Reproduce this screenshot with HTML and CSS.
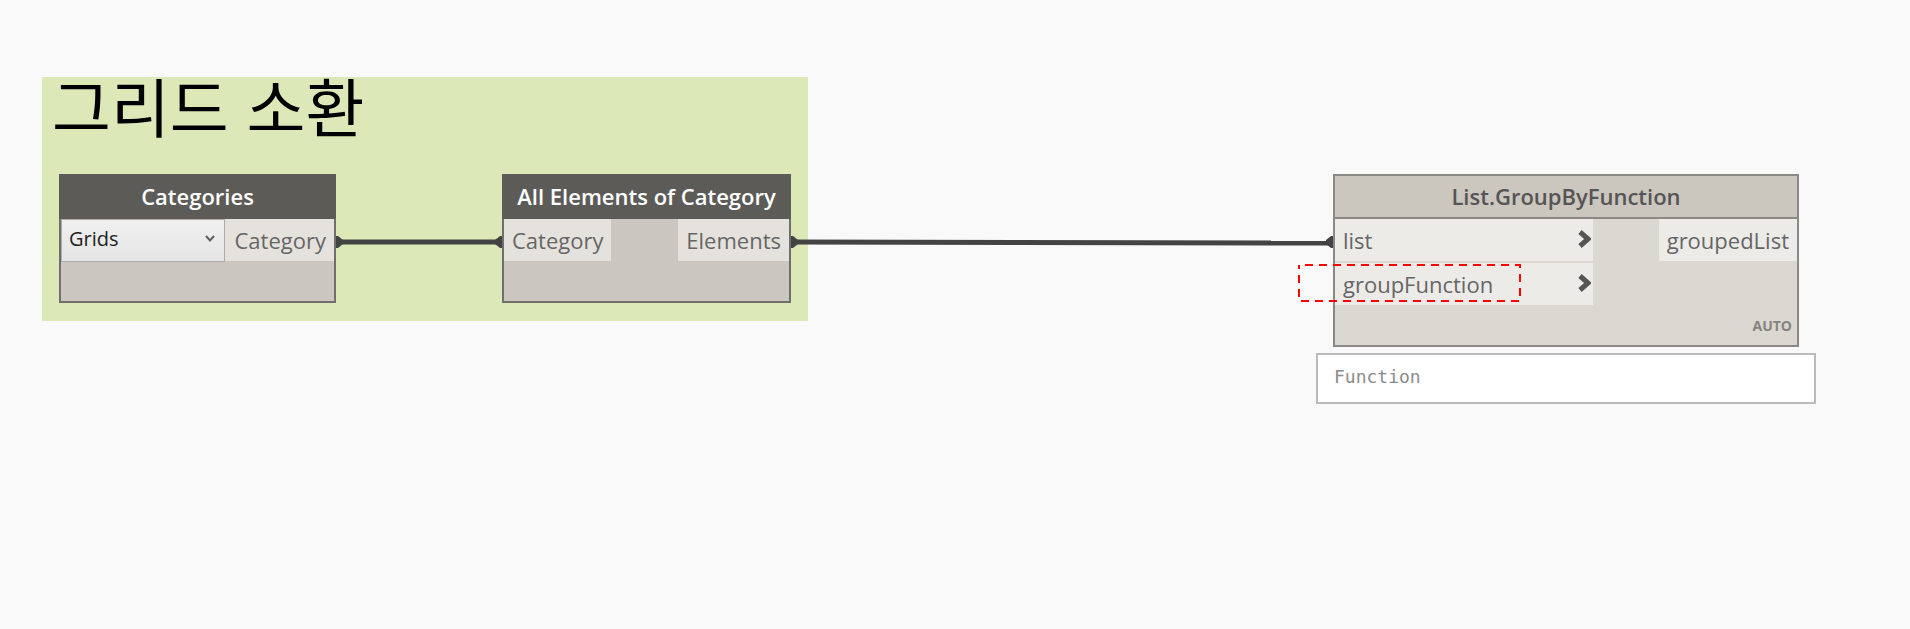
FILE: index.html
```html
<!DOCTYPE html>
<html lang="ko">
<head>
<meta charset="utf-8">
<title>그리드 소환</title>
<link rel="stylesheet" href="styles.css">
</head>
<body>
<main class="canvas">
  <section class="group">
    <h1 class="group-title">그리드 소환</h1>
  </section>

  <svg class="wires" aria-hidden="true">
    <g class="wire">
      <line x1="340" y1="242" x2="500" y2="242"/>
      <line x1="794" y1="242" x2="1330" y2="243"/>
    </g>
    <g class="plug">
      <path d="M336 236h2l5 4v4l-5 4h-2z"/>
      <path d="M502 236h-2l-5 4v4l5 4h2z"/>
      <path d="M791 236h2l5 4v4l-5 4h-2z"/>
      <path d="M1333 236h-2l-5 4v4l5 4h2z"/>
    </g>
  </svg>

  <article class="node node-categories">
    <h2 class="node-title">Categories</h2>
    <div class="node-body">
      <select class="picker" aria-label="Category"><option>Grids</option></select>
      <svg class="picker-arrow" viewBox="0 0 10 8" aria-hidden="true"><path d="M1 1l4 4.500 4-4.500"/></svg>
      <span class="port port-fill">Category</span>
    </div>
  </article>

  <article class="node node-elements">
    <h2 class="node-title">All Elements of Category</h2>
    <div class="node-body">
      <span class="port">Category</span>
      <span class="port port-out">Elements</span>
    </div>
  </article>

  <article class="node node-inactive node-group-by">
    <h2 class="node-title">List.GroupByFunction</h2>
    <div class="node-body">
      <div class="inputs">
        <span class="port">list<svg class="chevron" viewBox="0 0 13 18" aria-hidden="true"><path d="M2 2l8 7-8 7"/></svg></span>
        <span class="port">groupFunction<svg class="chevron" viewBox="0 0 13 18" aria-hidden="true"><path d="M2 2l8 7-8 7"/></svg></span>
      </div>
      <span class="port port-out">groupedList</span>
    </div>
    <footer class="lacing">AUTO</footer>
  </article>

  <output class="preview">Function</output>

  <svg class="highlight" aria-hidden="true"><rect x="1" y="1" width="221" height="36"/></svg>
</main>
</body>
</html>
```
FILE: styles.css
```css
* { box-sizing: border-box; }

body {
  margin: 0;
  background: #f9f9f9;
  font-family: "Open Sans", "Noto Sans", sans-serif;
}

.canvas {
  position: relative;
  min-height: 100vh;
  overflow: hidden;
}

.group {
  position: absolute;
  left: 42px;
  top: 77px;
  width: 766px;
  height: 244px;
  padding: 0 10px;
  background: #dce8b8;
}

.group-title {
  margin: 0;
  color: #000;
  font: 400 64px/54px "Noto Sans CJK KR", sans-serif;
}

.wires {
  position: absolute;
  left: 0;
  top: 0;
  width: 100%;
  height: 100%;
}

.wire { stroke: #434343; stroke-width: 5; }
.plug { fill: #434343; }

.node {
  position: absolute;
  top: 174px;
  height: 129px;
  border: 2px solid #706f6c;
  background: #cbc6bf;
  color: #666;
  font-size: 22px;
}

.node-categories { left: 59px; width: 277px; }
.node-elements { left: 502px; width: 289px; }
.node-group-by { left: 1333px; width: 466px; height: 173px; }

.node-title {
  margin: -2px -2px 0;
  height: 45px;
  background: #5d5b58;
  color: #fff;
  font-size: 22px;
  font-weight: 600;
  line-height: 44px;
  text-align: center;
}

.node-body {
  position: relative;
  display: flex;
  align-items: flex-start;
}

.port {
  display: flex;
  align-items: center;
  height: 42px;
  padding: 0 8px 1px;
  background: #e5e2dd;
}

.port-out { margin-left: auto; }

.port-fill {
  flex: 1;
  justify-content: flex-end;
}

.picker {
  appearance: none;
  width: 164px;
  height: 43px;
  padding: 0 7px 4px;
  border: 1px solid #acacac;
  border-radius: 0;
  background: linear-gradient(#f0f0f0, #e5e5e5);
  color: #222;
  font: 400 20px "Open Sans", sans-serif;
}

.picker-arrow {
  position: absolute;
  left: 144px;
  top: 16px;
  width: 10px;
  height: 8px;
  fill: none;
  stroke: #606060;
  stroke-width: 2;
}

.node-inactive {
  border-color: #8b8986;
  background: #dbd8d1;
}

.node-inactive .node-title {
  border: 2px solid #8b8986;
  background: #cbc6be;
  color: #555;
  line-height: 40px;
}

.node-inactive .port { background: #edebe8; }

.inputs {
  display: grid;
  gap: 2px;
  width: 258px;
}

.chevron {
  width: 13px;
  height: 18px;
  margin: 0 -6px 2px auto;
  fill: none;
  stroke: #555;
  stroke-width: 5;
}

.lacing {
  padding: 10px 5px 0;
  color: #858380;
  font-size: 14px;
  font-weight: 700;
  line-height: 22px;
  text-align: right;
}

.preview {
  position: absolute;
  left: 1316px;
  top: 353px;
  width: 500px;
  height: 51px;
  padding: 0 16px;
  border: 2px solid #bbb;
  background: #fff;
  color: #8b8b8b;
  font: 400 18px/44px "DejaVu Sans Mono", monospace;
}

.highlight {
  position: absolute;
  left: 1298px;
  top: 264px;
  width: 223px;
  height: 38px;
  fill: none;
  stroke: #f00;
  stroke-width: 2;
  stroke-dasharray: 8 6;
  stroke-dashoffset: 8;
}
```
